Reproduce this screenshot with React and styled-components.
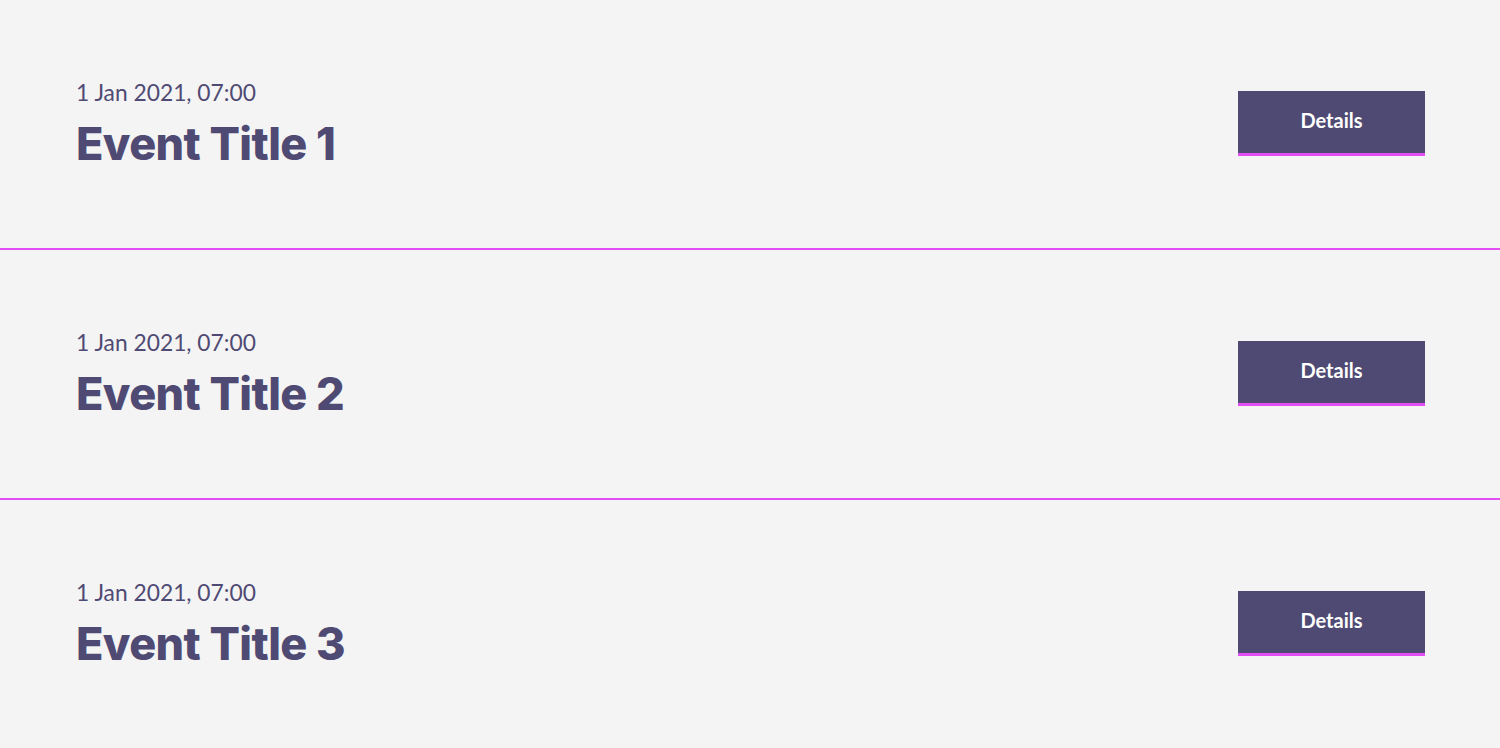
import React from "react";
import styled, { createGlobalStyle } from "styled-components";

const events = [
  { id: 1, date: "1 Jan 2021, 07:00", title: "Event Title 1" },
  { id: 2, date: "1 Jan 2021, 07:00", title: "Event Title 2" },
  { id: 3, date: "1 Jan 2021, 07:00", title: "Event Title 3" },
];

function App() {
  return (
    <>
      <GlobalStyle />
      <List>
        {events.map((event) => (
          <Row key={event.id}>
            <Info>
              <Date>{event.date}</Date>
              <Title>{event.title}</Title>
            </Info>
            <DetailsButton>Details</DetailsButton>
          </Row>
        ))}
      </List>
    </>
  );
}

const GlobalStyle = createGlobalStyle`
  body {
    margin: 0;
    background: #f4f4f4;
    font-family: "Lato", "Noto Sans", sans-serif;
  }
`;

const List = styled.div`
  display: flex;
  flex-direction: column;
`;

const Row = styled.div`
  height: 248px;
  display: flex;
  align-items: center;
  justify-content: space-between;
  padding: 0 75px 0 76px;
  border-bottom: 2px solid #e34ef4;

  &:last-child {
    border-bottom: none;
  }
`;

const Info = styled.div`
  display: flex;
  flex-direction: column;
`;

const Date = styled.div`
  font-family: "Lato", "Noto Sans", sans-serif;
  font-size: 22.8px;
  color: #4f4a73;
  line-height: 28px;
`;

const Title = styled.div`
  font-family: "Inter", "Noto Sans", sans-serif;
  font-weight: 800;
  font-size: 45px;
  letter-spacing: -0.6px;
  color: #4f4a73;
  line-height: 54px;
  margin-top: 11px;
`;

const DetailsButton = styled.button`
  width: 187px;
  height: 65px;
  margin-top: -2px;
  display: flex;
  align-items: center;
  justify-content: center;
  padding: 0 0 4px;
  background: #4f4a73;
  border: none;
  border-bottom: 3px solid #e34ef4;
  color: #ffffff;
  font-family: "Lato", "Noto Sans", sans-serif;
  font-weight: 700;
  font-size: 20px;
  cursor: pointer;
`;

export default App;
